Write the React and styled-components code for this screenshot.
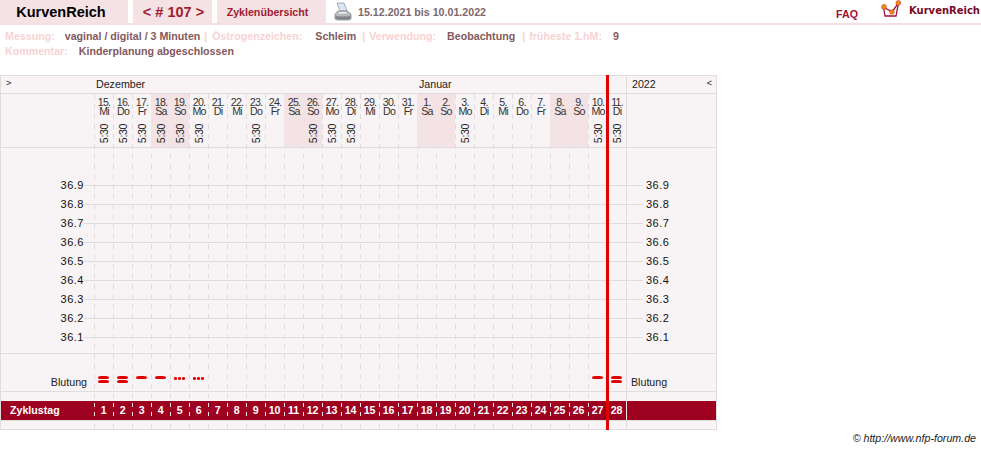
import React from 'react'
import styled, { createGlobalStyle } from 'styled-components'

const GlobalStyle = createGlobalStyle`
html, body {
  margin: 0;
  padding: 0;
  background: #fff;
  font-family: "Liberation Sans", Arial, sans-serif;
}
`

const Header = styled.header`
display: flex;
align-items: stretch;
height: 25px;
box-sizing: border-box;
border-bottom: 2px solid #f4e0e2;
`

const Tab = styled.div`
display: flex;
align-items: center;
justify-content: center;
box-sizing: border-box;
width: ${p => p.$w}px;
margin-right: ${p => p.$gap || 0}px;
padding-right: ${p => p.$shift || 0}px;
padding-left: ${p => p.$push || 0}px;
background: #f4e2e4;
font-weight: bold;
font-size: ${p => p.$size || 10.67}px;
color: ${p => p.$color || '#a01c30'};
`

const PrintBox = styled.div`
display: flex;
align-items: center;
margin-left: 8px;
`

const DateRange = styled.div`
margin-left: 6px;
font-size: 10.67px;
font-weight: bold;
color: #7f686c;
line-height: 24px;
`

const Faq = styled.div`
margin-left: auto;
font-size: 10.67px;
font-weight: bold;
color: #a01030;
padding-top: 7px;
line-height: 14px;
`

const Logo = styled.div`
display: flex;
align-items: flex-start;
margin-left: 23px;
`

const LogoText = styled.span`
font-family: "DejaVu Sans", Verdana, sans-serif;
font-size: 10px;
font-weight: bold;
color: #7a0a24;
margin: 5px 1px 0 8px;
line-height: 12px;
`

const Meta = styled.div`
padding: 4px 0 0 5px;
font-size: 10.67px;
font-weight: bold;
line-height: 15px;
height: 50px;
box-sizing: border-box;
`

const MetaRow = styled.div`
display: flex;
white-space: nowrap;
`

const MetaLabel = styled.span`
color: #f8d2d4;
margin-right: ${p => p.$gap}px;
`

const MetaValue = styled.span`
color: #84585c;
margin-right: ${p => p.$gap || 0}px;
`

const Chart = styled.section`
position: relative;
width: 717px;
box-sizing: border-box;
border: 1px solid #dedcdc;
background: #f8f3f4;
color: #222;
font-size: 10.67px;
`

// the day columns run through every row below the month row
const DashLayer = styled.div`
position: absolute;
left: 93px;
top: 18px;
bottom: 0;
width: 533px;
box-sizing: border-box;
display: grid;
grid-template-columns: repeat(28, 19px);
border-right: 1px solid #dedcdc;
`

const DashCol = styled.div`
background: repeating-linear-gradient(to bottom, #dedcdc 0 5px, transparent 5px 10px) 0 0 / 1px 100% no-repeat;
`

const RedLine = styled.div`
position: absolute;
left: 605px;
top: -1px;
bottom: -1px;
width: 3px;
background: #e00000;
z-index: 2;
`

const Row = styled.div`
position: relative;
display: grid;
grid-template-columns: 93px repeat(28, 19px) 90px;
height: ${p => p.$h}px;
box-sizing: border-box;
border-bottom: 1px solid #dedcdc;
`

const Gap = styled.div`
height: ${p => p.$h}px;
`

const CornerCell = styled.div`
display: flex;
justify-content: space-between;
padding: 0 4px 0 5px;
line-height: 17px;
border-left: ${p => (p.$right ? '1px solid #dedcdc' : 'none')};
`

const Arrow = styled.span`
font-size: 9px;
line-height: 15px;
`

const MonthCell = styled.div`
grid-column: span ${p => p.$span};
padding-left: 2px;
line-height: 17px;
`

const DayHead = styled.div`
display: flex;
flex-direction: column;
align-items: center;
padding: 4px 0 0 1px;
font-size: 10.67px;
letter-spacing: -0.8px;
line-height: 9px;
color: #333;
background: ${p => (p.$weekend ? '#f4e3e5' : 'transparent')};
min-width: 0;
`

const DayLine = styled.div`
height: 9px;
overflow: visible;
`

const DayTime = styled.div`
writing-mode: vertical-rl;
transform: rotate(180deg);
margin-top: 8px;
letter-spacing: -0.4px;
line-height: 11px;
color: #222;
`

const ChartBody = styled.div`
height: 206px;
padding-top: 28px;
box-sizing: border-box;
border-bottom: 1px solid #dedcdc;
`

const TempRow = styled.div`
position: relative;
display: flex;
align-items: center;
height: 19px;
`

const TempText = styled.span`
box-sizing: border-box;
width: ${p => p.$w}px;
padding-bottom: 2px;
text-align: ${p => (p.$right ? 'left' : 'right')};
padding-left: ${p => (p.$right ? 3 : 0)}px;
font-size: 11px;
letter-spacing: 0.5px;
color: #111;
`

const TempLine = styled.i`
flex: 1;
height: 1px;
background: #dedcdc;
`

const SideLabel = styled.div`
line-height: 13px;
padding-top: 22px;
color: #222;
text-align: ${p => (p.$right ? 'left' : 'right')};
padding-right: ${p => (p.$right ? 0 : 7)}px;
padding-left: ${p => (p.$right ? 5 : 0)}px;
`

const BleedCol = styled.div`
display: flex;
flex-direction: column;
align-items: center;
gap: 1px;
padding-top: 22px;
`

const Dash = styled.b`
display: block;
width: 11px;
height: 3px;
background: #e00000;
border-radius: 4px / 2px;
`

const Dots = styled.b`
display: flex;
gap: 1.7px;
margin-top: 1px;
`

const Dot = styled.i`
display: block;
width: 2.5px;
height: 2.5px;
background: #e00000;
border-radius: 50%;
`

const CycleRow = styled(Row)`
background: #9e0020;
color: #fff;
font-weight: bold;
line-height: 19px;
z-index: 1;
`

const CycleTitle = styled.div`
padding-left: 9px;
`

const CycleCol = styled.div`
background: repeating-linear-gradient(to bottom, #f4e2e4 0 4px, transparent 4px 9px) 0 2px / 1px 100% no-repeat;
text-align: center;
letter-spacing: -0.2px;
`

const CycleEnd = styled.div`
border-left: 1px solid #f0e8e8;
`

const Copyright = styled.div`
width: 976px;
text-align: right;
font-size: 10.67px;
font-style: italic;
color: #222;
line-height: 14px;
margin-top: 1px;
`

const WEEKDAYS = ['Mi', 'Do', 'Fr', 'Sa', 'So', 'Mo', 'Di']
const TIMED = [15, 16, 17, 18, 19, 20, 23, 26, 27, 28, 3, 10, 11]
const DAYS = Array.from({ length: 28 }, (_, i) => {
  const day = i < 17 ? 15 + i : i - 16
  const name = WEEKDAYS[i % 7]
  return { day, name, weekend: name === 'Sa' || name === 'So', timed: TIMED.includes(day) }
})
const TEMPS = ['36.9', '36.8', '36.7', '36.6', '36.5', '36.4', '36.3', '36.2', '36.1']
const BLEED = { 0: 'heavy', 1: 'heavy', 2: 'medium', 3: 'medium', 4: 'light', 5: 'light', 26: 'medium', 27: 'heavy' }

const Printer = () => (
  <svg width="18" height="19" viewBox="0 0 18 19">
    <path d="M3 1h7l3 8H6z" fill="#dbe6f2" stroke="#8e9ba8" strokeWidth="0.8" />
    <path d="M1 12l3-3h9l4 3v5l-2 1H3l-2-1z" fill="#b8bbbe" stroke="#7f8387" strokeWidth="0.7" />
    <path d="M1.5 13.5l2 1h11l2-1V16l-2 1.5h-11l-2-1.5z" fill="#7d8185" />
    <path d="M5 10h7l1 1.5H4z" fill="#eef0f1" />
  </svg>
)

const LogoMark = () => (
  <svg width="20" height="20" viewBox="0 0 20 20">
    <path d="M0 9.5h20M5 17v3M9 17v3M13 17v3" stroke="#eceaea" strokeWidth="0.8" fill="none" />
    <path d="M2.5 7l1.5 9h11l2.5-13" fill="none" stroke="#a01040" strokeWidth="1.3" />
    <path d="M2.5 7l8.5 5 6.5-9" fill="none" stroke="#a01040" strokeWidth="1.3" />
    <circle cx="3" cy="7" r="2.4" fill="#f09010" stroke="#c83820" strokeWidth="0.6" />
    <circle cx="11" cy="12" r="2.3" fill="#f09010" stroke="#c83820" strokeWidth="0.6" />
    <circle cx="17.3" cy="3" r="2.4" fill="#f09010" stroke="#c83820" strokeWidth="0.6" />
  </svg>
)

const BleedMark = ({ kind }) => {
  if (kind === 'heavy') return <><Dash /><Dash /></>
  if (kind === 'medium') return <Dash />
  if (kind === 'light') return <Dots><Dot /><Dot /><Dot /></Dots>
  return null
}

export default function App() {
  return (
    <>
      <GlobalStyle />
      <Header>
        <Tab $w={128} $gap={5} $size={14.5} $color="#000" $shift={6}>KurvenReich</Tab>
        <Tab $w={79} $gap={5} $size={14.5} $push={2}>&lt; # 107 &gt;</Tab>
        <Tab $w={109} $shift={8}>Zyklenübersicht</Tab>
        <PrintBox><Printer /></PrintBox>
        <DateRange>15.12.2021 bis 10.01.2022</DateRange>
        <Faq>FAQ</Faq>
        <Logo>
          <LogoMark />
          <LogoText>KurvenReich</LogoText>
        </Logo>
      </Header>

      <Meta>
        <MetaRow>
          <MetaLabel $gap={10}>Messung:</MetaLabel>
          <MetaValue $gap={4}>vaginal / digital / 3 Minuten</MetaValue>
          <MetaLabel $gap={5}>|</MetaLabel>
          <MetaLabel $gap={13}>Östrogenzeichen:</MetaLabel>
          <MetaValue $gap={6}>Schleim</MetaValue>
          <MetaLabel $gap={4}>|</MetaLabel>
          <MetaLabel $gap={11}>Verwendung:</MetaLabel>
          <MetaValue $gap={7}>Beobachtung</MetaValue>
          <MetaLabel $gap={4}>|</MetaLabel>
          <MetaLabel $gap={11}>früheste 1.hM:</MetaLabel>
          <MetaValue>9</MetaValue>
        </MetaRow>
        <MetaRow>
          <MetaLabel $gap={11}>Kommentar:</MetaLabel>
          <MetaValue>Kinderplanung abgeschlossen</MetaValue>
        </MetaRow>
      </Meta>

      <Chart>
        <DashLayer>
          {DAYS.map((d, i) => <DashCol key={i} />)}
        </DashLayer>

        <Row $h={18}>
          <CornerCell><Arrow>&gt;</Arrow></CornerCell>
          <MonthCell $span={17}>Dezember</MonthCell>
          <MonthCell $span={11}>Januar</MonthCell>
          <CornerCell $right><span>2022</span><Arrow>&lt;</Arrow></CornerCell>
        </Row>

        <Row $h={54}>
          <div />
          {DAYS.map((d, i) => (
            <DayHead key={i} $weekend={d.weekend}>
              <DayLine>{d.day}.</DayLine>
              <DayLine>{d.name}</DayLine>
              {d.timed && <DayTime>5:30</DayTime>}
            </DayHead>
          ))}
          <div />
        </Row>

        <ChartBody>
          {TEMPS.map(t => (
            <TempRow key={t}>
              <TempText $w={83}>{t}</TempText>
              <TempLine />
              <TempText $w={73} $right>{t}</TempText>
            </TempRow>
          ))}
        </ChartBody>

        <Row $h={38}>
          <SideLabel>Blutung</SideLabel>
          {DAYS.map((d, i) => (
            <BleedCol key={i}><BleedMark kind={BLEED[i]} /></BleedCol>
          ))}
          <SideLabel $right>Blutung</SideLabel>
        </Row>

        <Gap $h={9} />

        <CycleRow $h={20}>
          <CycleTitle>Zyklustag</CycleTitle>
          {DAYS.map((d, i) => <CycleCol key={i}>{i + 1}</CycleCol>)}
          <CycleEnd />
        </CycleRow>

        <Gap $h={8} />

        <RedLine />
      </Chart>

      <Copyright>© http://www.nfp-forum.de</Copyright>
    </>
  )
}
